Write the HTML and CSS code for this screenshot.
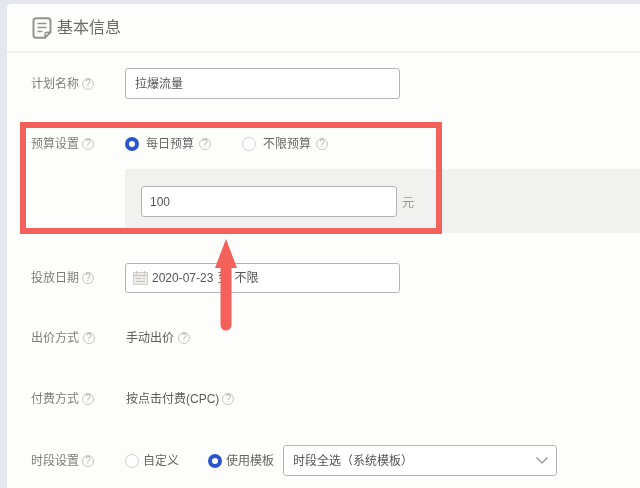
FILE: index.html
```html
<!DOCTYPE html>
<html lang="zh-CN">
<head>
    <meta charset="UTF-8">
    <meta name="viewport" content="width=device-width, initial-scale=1.0">
    <title>基本信息</title>
    <link rel="stylesheet" href="styles.css">
</head>
<body>
    <div class="card">
        <div class="card-header">
            <svg class="header-icon" width="20" height="22" viewBox="0 0 20 22">
                <path d="M4 1.2h12a2.5 2.5 0 0 1 2.5 2.5v11.5l-5.5 5.6H4a2.5 2.5 0 0 1-2.5-2.5V3.7A2.5 2.5 0 0 1 4 1.2z" fill="none" stroke="#929292" stroke-width="2"/>
                <path d="M13 20.8v-3.6a2 2 0 0 1 2-2h3.5" fill="none" stroke="#929292" stroke-width="1.4"/>
                <path d="M5.5 6.5h9M5.5 10.5h9M5.5 14.5h5" fill="none" stroke="#929292" stroke-width="1.5"/>
            </svg>
            <span class="card-title">基本信息</span>
        </div>

        <div class="form">
            <div class="row row-name">
                <div class="label">计划名称<span class="help">?</span></div>
                <div class="field name-field">拉爆流量</div>
            </div>

            <div class="row row-budget">
                <div class="label">预算设置<span class="help">?</span></div>
                <span class="radio checked"></span>
                <span class="radio-text">每日预算</span><span class="help">?</span>
                <span class="radio second"></span>
                <span class="radio-text">不限预算</span><span class="help">?</span>
            </div>
            <div class="budget-panel">
                <div class="field budget-field">100</div>
                <span class="unit">元</span>
            </div>

            <div class="row row-date">
                <div class="label">投放日期<span class="help">?</span></div>
                <div class="field date-field">
                    <svg class="date-icon" width="15" height="14" viewBox="0 0 15 14">
                        <rect x="0.5" y="1.5" width="14" height="12" fill="#ecebe9" stroke="#d2d1cf"/>
                        <path d="M0.5 4.5h14M3.5 0v3M11.5 0v3M3 7.5h5M9.5 7.5h2.5M3 10.5h9" fill="none" stroke="#c4c3c1"/>
                    </svg>
                    <span>2020-07-23</span><span class="date-to">至</span><span>不限</span>
                </div>
            </div>

            <div class="row row-bid">
                <div class="label">出价方式<span class="help">?</span></div>
                <span class="plain">手动出价</span><span class="help">?</span>
            </div>

            <div class="row row-pay">
                <div class="label">付费方式<span class="help">?</span></div>
                <span class="plain">按点击付费(CPC)</span><span class="help">?</span>
            </div>

            <div class="row row-time">
                <div class="label">时段设置<span class="help">?</span></div>
                <span class="radio"></span>
                <span class="radio-text short">自定义</span>
                <span class="radio checked third"></span>
                <span class="radio-text short">使用模板</span>
                <div class="field select-field">
                    <span>时段全选（系统模板）</span>
                    <svg width="12" height="7" viewBox="0 0 12 7"><path d="M0.5 0.5l5.5 5.5 5.5-5.5" fill="none" stroke="#8a8a8a" stroke-width="1.1"/></svg>
                </div>
            </div>
        </div>
    </div>

    <!-- annotation drawn on top of the screenshot -->
    <div class="mark-box"></div>
    <svg class="mark-arrow" width="22" height="92" viewBox="0 0 22 92">
        <path d="M11 0L22 29H16.5V86a5.5 5.5 0 0 1-11 0V29H0z" fill="#f4605a"/>
    </svg>
</body>
</html>
```

FILE: styles.css
```css
* {
    margin: 0;
    padding: 0;
    box-sizing: border-box;
}

body {
    background: #e4e7ee;
    color: #666;
    font-family: "Liberation Sans", "Noto Sans CJK SC", sans-serif;
    font-size: 12px;
    width: 640px;
    height: 488px;
    overflow: hidden;
    padding: 4px 0 0 7px;
    position: relative;
}

/* the reference is a soft video frame */
.card {
    background: #fdfdfc;
    border-top-left-radius: 4px;
    height: 484px;
    overflow: hidden;
    filter: blur(0.4px);
}

.card-header {
    height: 49px;
    border-bottom: 2px solid #f0f0ef;
    padding-left: 25px;
    display: flex;
    align-items: center;
}

.header-icon {
    margin-right: 5px;
}

.card-title {
    font-size: 16px;
    color: #6a6a6a;
    margin-bottom: 3px;
}

.form {
    padding: 15px 0 0 24px;
}

.row {
    display: flex;
    align-items: center;
    line-height: 20px;
}

.label {
    width: 94px;
    flex-shrink: 0;
    display: flex;
    align-items: center;
    color: #7d7d7d;
}

.help {
    width: 12px;
    height: 12px;
    margin-left: 3px;
    border: 1px solid #c6c6c6;
    border-radius: 50%;
    color: #b0b0b0;
    font-size: 10px;
    line-height: 10px;
    text-align: center;
    flex-shrink: 0;
}

.field {
    background: #fff;
    border: 1px solid #b4b4b4;
    border-radius: 3px;
    height: 31px;
    display: flex;
    align-items: center;
    color: #555;
}

.name-field {
    width: 275px;
    padding-left: 9px;
}

.row-budget {
    margin-top: 35px;
}

.radio {
    width: 14px;
    height: 14px;
    border: 1px solid #cfcfcf;
    border-radius: 50%;
    background: #fff;
    flex-shrink: 0;
}

.radio.checked {
    border: 4px solid #2a55cf;
}

.radio.second {
    margin-left: 31px;
}

.radio.third {
    margin-left: 29px;
}

.radio-text {
    margin-left: 7px;
    margin-right: 2px;
}

.radio-text.short {
    margin-left: 4px;
    margin-right: 0;
}

.budget-panel {
    margin: 15px 0 0 94px;
    height: 64px;
    padding: 17px 0 16px 16px;
    background: #f1f1f0;
    display: flex;
    align-items: center;
}

.budget-field {
    width: 256px;
    padding-left: 8px;
}

.unit {
    margin-left: 5px;
    color: #9a9a9a;
}

.row-date {
    margin-top: 30px;
}

.date-field {
    width: 275px;
    height: 30px;
    padding-left: 7px;
}

.date-icon {
    margin-right: 4px;
}

.date-to {
    margin: 0 5px 0 4px;
}

.row-bid {
    margin-top: 35px;
}

.row-pay {
    margin-top: 41px;
}

.row-bid .help {
    margin-left: 4px;
}

.plain {
    margin-left: 1px;
    color: #5c5c5c;
}

.row-time {
    margin-top: 36px;
}

.select-field {
    width: 274px;
    margin-left: 9px;
    padding: 0 8px 0 9px;
    justify-content: space-between;
}

.mark-box {
    position: absolute;
    left: 20px;
    top: 122px;
    width: 422px;
    height: 112px;
    border: 6px solid #f4605a;
}

.mark-arrow {
    position: absolute;
    left: 215px;
    top: 239px;
}
```
